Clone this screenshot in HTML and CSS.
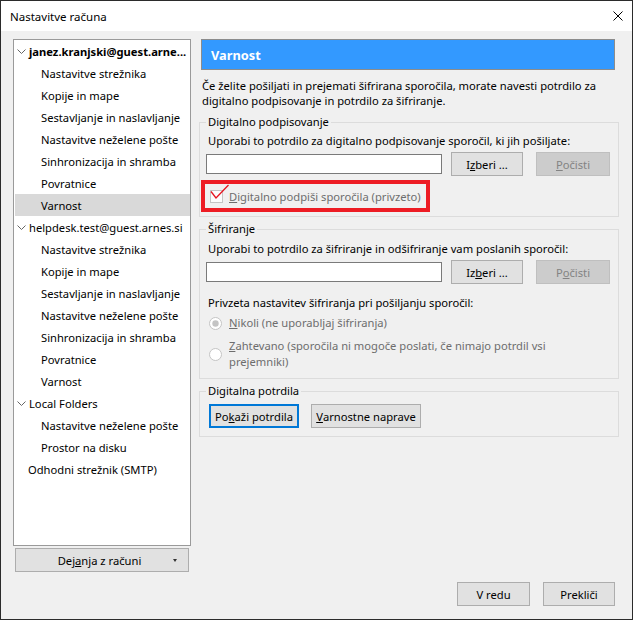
FILE: index.html
```html
<!DOCTYPE html>
<html lang="sl">
<head>
<meta charset="utf-8">
<title>Nastavitve računa</title>
<link rel="stylesheet" href="styles.css">
</head>
<body>
<div class="window">
  <div class="titlebar">
    <span class="title">Nastavitve računa</span>
    <svg class="close" width="10" height="10" viewBox="0 0 10 10"><path d="M0.5 0.5 L9.5 9.5 M9.5 0.5 L0.5 9.5" stroke="#000" stroke-width="1" fill="none"/></svg>
  </div>
  <div class="content">
    <div class="main">
      <div class="left">
        <div class="tree">
          <div class="row account bold"><svg class="chev" width="9" height="5" viewBox="0 0 9 5"><path d="M0.5 0.5 L4.5 4.5 L8.5 0.5" stroke="#666" fill="none"/></svg><span>janez.kranjski@guest.arne...</span></div>
          <div class="row child">Nastavitve strežnika</div>
          <div class="row child">Kopije in mape</div>
          <div class="row child">Sestavljanje in naslavljanje</div>
          <div class="row child">Nastavitve neželene pošte</div>
          <div class="row child">Sinhronizacija in shramba</div>
          <div class="row child">Povratnice</div>
          <div class="row child selected">Varnost</div>
          <div class="row account"><svg class="chev" width="9" height="5" viewBox="0 0 9 5"><path d="M0.5 0.5 L4.5 4.5 L8.5 0.5" stroke="#666" fill="none"/></svg><span>helpdesk.test@guest.arnes.si</span></div>
          <div class="row child">Nastavitve strežnika</div>
          <div class="row child">Kopije in mape</div>
          <div class="row child">Sestavljanje in naslavljanje</div>
          <div class="row child">Nastavitve neželene pošte</div>
          <div class="row child">Sinhronizacija in shramba</div>
          <div class="row child">Povratnice</div>
          <div class="row child">Varnost</div>
          <div class="row account"><svg class="chev" width="9" height="5" viewBox="0 0 9 5"><path d="M0.5 0.5 L4.5 4.5 L8.5 0.5" stroke="#666" fill="none"/></svg><span>Local Folders</span></div>
          <div class="row child">Nastavitve neželene pošte</div>
          <div class="row child">Prostor na disku</div>
          <div class="row plain">Odhodni strežnik (SMTP)</div>
        </div>
        <button class="btn actions"><span class="actions-label">Dej<u>a</u>nja z računi</span><span class="caret"></span></button>
      </div>
      <div class="right">
        <div class="header">Varnost</div>
        <p class="desc">Če želite pošiljati in prejemati šifrirana sporočila, morate navesti potrdilo za<br>digitalno podpisovanje in potrdilo za šifriranje.</p>

        <fieldset class="group g1">
          <legend>Digitalno podpisovanje</legend>
          <div class="gbody">
            <div class="label">Uporabi to potrdilo za digitalno podpisovanje sporočil, ki jih pošiljate:</div>
            <div class="certrow">
              <div class="field"></div>
              <button class="btn choose">I<u>z</u>beri ...</button>
              <button class="btn clear" disabled><u>P</u>očisti</button>
            </div>
            <div class="redbox">
              <svg class="check" width="13" height="13" viewBox="0 0 13 13"><rect x="0.5" y="0.5" width="12" height="12" fill="#fcfcfc" stroke="#c4c4c4"/><path d="M1 1.5 L6 8 L18.5 -5" stroke="#e5141e" stroke-width="1.3" fill="none"/></svg>
              <span class="disabled"><u>D</u>igitalno podpiši sporočila (privzeto)</span>
            </div>
          </div>
        </fieldset>

        <fieldset class="group g2">
          <legend>Šifriranje</legend>
          <div class="gbody">
            <div class="label">Uporabi to potrdilo za šifriranje in odšifriranje vam poslanih sporočil:</div>
            <div class="certrow">
              <div class="field"></div>
              <button class="btn choose">Iz<u>b</u>eri ...</button>
              <button class="btn clear" disabled>P<u>o</u>čisti</button>
            </div>
            <div class="label pref">Privzeta nastavitev šifriranja pri pošiljanju sporočil:</div>
            <div class="radio r1">
              <svg width="13" height="13" viewBox="0 0 13 13"><circle cx="6.5" cy="6.5" r="6" fill="#fff" stroke="#c4c4c4"/><circle cx="6.5" cy="6.5" r="3.2" fill="#c4c4c4"/></svg>
              <span class="disabled"><u>N</u>ikoli (ne uporabljaj šifriranja)</span>
            </div>
            <div class="radio r2">
              <svg width="13" height="13" viewBox="0 0 13 13"><circle cx="6.5" cy="6.5" r="6" fill="#fff" stroke="#c4c4c4"/></svg>
              <span class="disabled"><u>Z</u>ahtevano (sporočila ni mogoče poslati, če nimajo potrdil vsi<br>prejemniki)</span>
            </div>
          </div>
        </fieldset>

        <fieldset class="group g3">
          <legend>Digitalna potrdila</legend>
          <div class="gbody">
            <div class="btnrow">
              <button class="btn focused show">Po<u>k</u>aži potrdila</button>
              <button class="btn devices"><u>V</u>arnostne naprave</button>
            </div>
          </div>
        </fieldset>
      </div>
    </div>
    <div class="footer">
      <button class="btn ok">V redu</button>
      <button class="btn cancel">Prekliči</button>
    </div>
  </div>
</div>
</body>
</html>
```

FILE: styles.css
```css
* { box-sizing: border-box; }
html, body { margin: 0; padding: 0; }
body {
  font-family: "Noto Sans", "Open Sans", sans-serif;
  font-size: 11.2px;
  color: #000;
  background: #fff;
}
u { text-decoration: underline; text-underline-offset: 1px; }

.window {
  width: 633px;
  height: 620px;
  border: 1px solid #2b2b2b;
  display: flex;
  flex-direction: column;
  background: #f0f0f0;
}

.titlebar {
  height: 30px;
  flex: none;
  background: #fff;
  display: flex;
  align-items: center;
  justify-content: space-between;
  padding: 0 9px 0 9px;
}
.title { font-size: 11.5px; }

.content {
  flex: 1;
  display: flex;
  flex-direction: column;
  padding: 8px 13px 13px 12px;
  min-height: 0;
}
.main {
  flex: 1;
  display: flex;
  gap: 8px;
  min-height: 0;
}

/* left column */
.left {
  width: 178px;
  flex: none;
  display: flex;
  flex-direction: column;
}
.tree {
  height: 507px;
  background: #fff;
  border: 1px solid #9a9a9a;
  overflow: hidden;
}
.row {
  height: 22px;
  margin: 0 0 0 1px;
  display: flex;
  align-items: center;
  white-space: nowrap;
}
.row.account { padding-left: 2px; }
.row.account .chev { margin-right: 3px; flex: none; }
.row.bold span { font-weight: bold; }
.row.child { padding-left: 26px; }
.row.plain { padding-left: 13px; }
.row.selected { background: #d9d9d9; }

.btn {
  font: inherit;
  color: #000;
  height: 24px;
  background: #e1e1e1;
  border: 1px solid #adadad;
  padding: 0;
  margin: 0;
  display: flex;
  align-items: center;
  justify-content: center;
}
.btn:disabled {
  background: #cccccc;
  border-color: #bfbfbf;
  color: #838383;
}
.btn.focused {
  border: 2px solid #0078d7;
}

.actions {
  margin: 2px 0 0 2px;
  width: 174px;
  padding: 0 11px 0 0;
}
.actions-label { flex: 1; text-align: center; padding-left: 10px; }
.caret {
  width: 0; height: 0;
  border-left: 2.5px solid transparent;
  border-right: 2.5px solid transparent;
  border-top: 3px solid #333;
}

/* right column */
.right {
  flex: 1;
  display: flex;
  flex-direction: column;
  min-width: 0;
}
.header {
  margin: 0 4px 0 2px;
  height: 31px;
  flex: none;
  background: #3399ff;
  border: 1px solid #8c8c8c;
  color: #fff;
  font-weight: bold;
  font-size: 12.8px;
  display: flex;
  align-items: center;
  padding-left: 9px;
}
.desc {
  margin: 8px 0 0 3px;
  line-height: 15px;
}

.group {
  margin: 6px 0 0 0;
  padding: 0;
  border: 1px solid #dcdcdc;
  min-width: 0;
}
.g2 { margin-top: 4px; }
.g3 { margin-top: 4px; }
.group legend {
  margin-left: 6px;
  padding: 0 2px;
  line-height: 16px;
}
.gbody {
  padding: 0 8px 4px 6px;
}
.label {
  line-height: 16px;
  margin-top: 3px;
  padding-left: 2px;
}
.g2 .label { margin-top: 4px; }
.g2 .label.pref { margin-top: 11px; }

.certrow {
  margin-top: 3px;
  height: 24px;
  display: flex;
  align-items: center;
}
.field {
  width: 236px;
  height: 20px;
  background: #fff;
  border: 1px solid #7a7a7a;
}
.choose { width: 72px; margin-left: 9px; }
.clear { width: 74px; margin-left: 13px; }

.redbox {
  margin: 4px 0 0 -5px;
  height: 32px;
  border: 4px solid #ed1c24;
  display: inline-flex;
  align-items: center;
  padding: 1px 5px 0 5px;
  gap: 6px;
  align-self: flex-start;
}
.check { overflow: visible; flex: none; }
.disabled { color: #6d6d6d; }

.radio {
  display: flex;
  align-items: center;
  gap: 7px;
  padding-left: 3px;
  line-height: 16px;
}
.radio svg { flex: none; }
.r1 { margin-top: 4px; }
.r2 { margin-top: 7px; }
.g2 .gbody { padding-bottom: 8px; }

.btnrow {
  display: flex;
  gap: 12px;
  margin-top: 5px;
  padding-left: 3px;
}
.g3 .gbody { padding-bottom: 8px; }
.show { width: 90px; }
.devices { width: 110px; }

.footer {
  flex: none;
  margin-top: 10px;
  margin-right: 4px;
  display: flex;
  justify-content: flex-end;
  gap: 13px;
}
.ok { width: 73px; }
.cancel { width: 72px; }
```
